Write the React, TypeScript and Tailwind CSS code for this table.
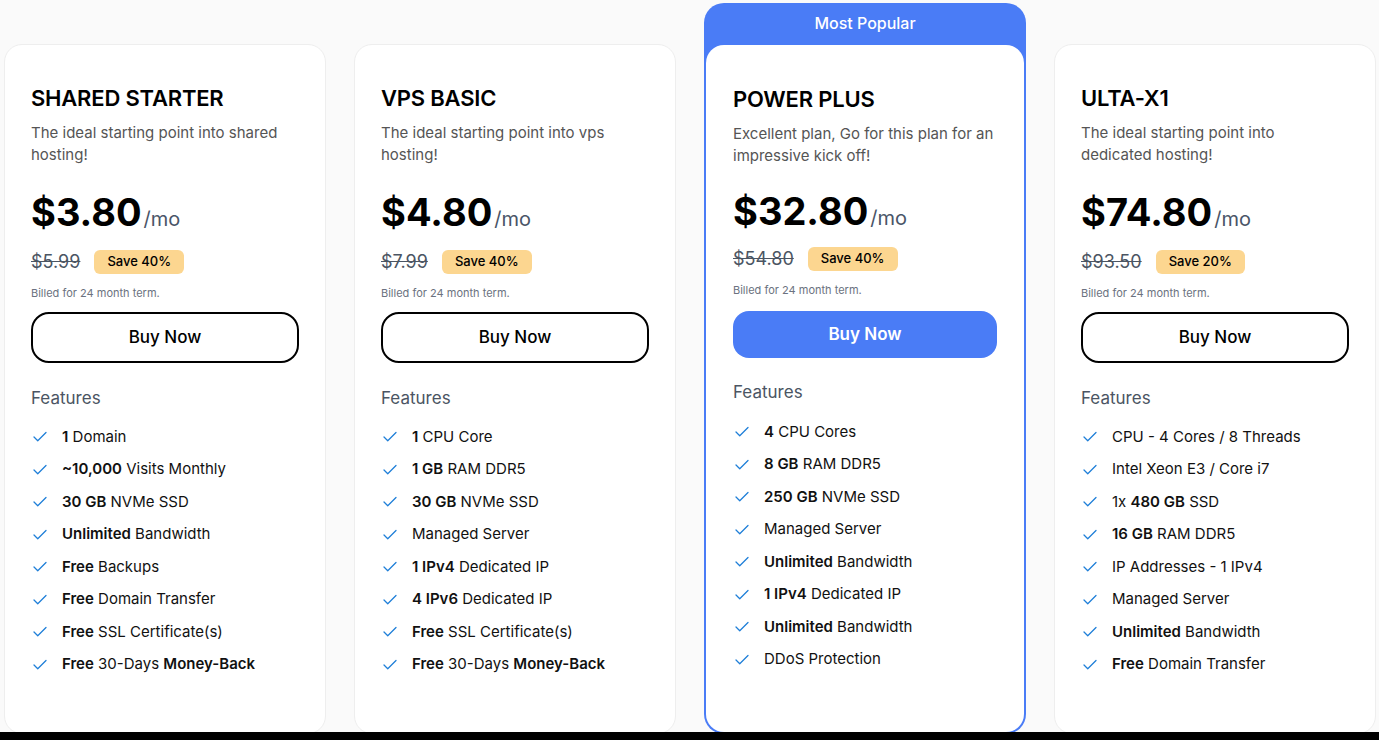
import React from 'react';
import { Check } from 'lucide-react';

type Feature = { bold?: string; text: string; bold2?: string; tail?: string };

type Plan = {
  name: string;
  desc: string;
  price: string;
  old: string;
  save: string;
  features: Feature[];
  popular?: boolean;
};

const PLANS: Plan[] = [
  {
    name: 'SHARED STARTER',
    desc: 'The ideal starting point into shared hosting!',
    price: '$3.80',
    old: '$5.99',
    save: 'Save 40%',
    features: [
      { bold: '1', text: ' Domain' },
      { bold: '~10,000', text: ' Visits Monthly' },
      { bold: '30 GB', text: ' NVMe SSD' },
      { bold: 'Unlimited', text: ' Bandwidth' },
      { bold: 'Free', text: ' Backups' },
      { bold: 'Free', text: ' Domain Transfer' },
      { bold: 'Free', text: ' SSL Certificate(s)' },
      { bold: 'Free', text: ' 30-Days ', bold2: 'Money-Back' },
    ],
  },
  {
    name: 'VPS BASIC',
    desc: 'The ideal starting point into vps hosting!',
    price: '$4.80',
    old: '$7.99',
    save: 'Save 40%',
    features: [
      { bold: '1', text: ' CPU Core' },
      { bold: '1 GB', text: ' RAM DDR5' },
      { bold: '30 GB', text: ' NVMe SSD' },
      { text: 'Managed Server' },
      { bold: '1 IPv4', text: ' Dedicated IP' },
      { bold: '4 IPv6', text: ' Dedicated IP' },
      { bold: 'Free', text: ' SSL Certificate(s)' },
      { bold: 'Free', text: ' 30-Days ', bold2: 'Money-Back' },
    ],
  },
  {
    name: 'POWER PLUS',
    desc: 'Excellent plan, Go for this plan for an impressive kick off!',
    price: '$32.80',
    old: '$54.80',
    save: 'Save 40%',
    popular: true,
    features: [
      { bold: '4', text: ' CPU Cores' },
      { bold: '8 GB', text: ' RAM DDR5' },
      { bold: '250 GB', text: ' NVMe SSD' },
      { text: 'Managed Server' },
      { bold: 'Unlimited', text: ' Bandwidth' },
      { bold: '1 IPv4', text: ' Dedicated IP' },
      { bold: 'Unlimited', text: ' Bandwidth' },
      { text: 'DDoS Protection' },
    ],
  },
  {
    name: 'ULTA-X1',
    desc: 'The ideal starting point into dedicated hosting!',
    price: '$74.80',
    old: '$93.50',
    save: 'Save 20%',
    features: [
      { text: 'CPU - 4 Cores / 8 Threads' },
      { text: 'Intel Xeon E3 / Core i7' },
      { text: '1x ', bold2: '480 GB', tail: ' SSD' },
      { bold: '16 GB', text: ' RAM DDR5' },
      { text: 'IP Addresses - 1 IPv4' },
      { text: 'Managed Server' },
      { bold: 'Unlimited', text: ' Bandwidth' },
      { bold: 'Free', text: ' Domain Transfer' },
    ],
  },
];

function FeatureRow({ f }: { f: Feature }) {
  return (
    <li className="flex items-center h-[24px]">
      <Check className="w-[18px] h-[18px] text-[#1f7fd8] shrink-0" strokeWidth={1.7} />
      <span className="ml-[13px] text-[15px] text-[#111]">
        {f.bold && <span className="font-semibold">{f.bold}</span>}
        {f.text}
        {f.bold2 && <span className="font-semibold">{f.bold2}</span>}
        {f.tail}
      </span>
    </li>
  );
}

function CardBody({ plan }: { plan: Plan }) {
  const pop = !!plan.popular;
  return (
    <div className={`flex flex-col ${pop ? 'px-[27px] pt-[39px]' : 'px-[26px] pt-[38px]'}`}>
      <h2 className="text-[22px] leading-[30px] font-semibold text-black tracking-[-0.2px]">{plan.name}</h2>
      <p className="mt-[9px] text-[15px] leading-[22px] text-[#555]">{plan.desc}</p>
      <div className={`flex items-baseline ${pop ? 'mt-[20px]' : 'mt-[22px]'}`}>
        <span className="text-[38px] leading-[48px] font-bold text-black">{plan.price}</span>
        <span className="text-[20px] text-[#4a5568] ml-[2px]">/mo</span>
      </div>
      <div className={`flex items-center ${pop ? 'mt-[10px]' : 'mt-[12px]'}`}>
        <span className="text-[18px] text-[#4b5563] line-through">{plan.old}</span>
        <span className="ml-[14px] h-[24px] px-[13px] flex items-center rounded-[6px] bg-[#fcd690] text-[13px] font-medium text-black">
          {plan.save}
        </span>
      </div>
      <p className="mt-[10px] text-[11px] leading-[16px] text-[#6b7280]">Billed for 24 month term.</p>
      {pop ? (
        <button className="mt-[13px] h-[47px] w-full rounded-[16px] bg-[#4a7cf6] text-white text-[17px] font-semibold">
          Buy Now
        </button>
      ) : (
        <button className="mt-[11px] h-[51px] w-full rounded-[18px] border-2 border-black bg-white text-black text-[17px] font-medium">
          Buy Now
        </button>
      )}
      <h3 className={`text-[17px] leading-[24px] text-[#4b5563] ${pop ? 'mt-[22px]' : 'mt-[23px]'}`}>Features</h3>
      <ul className={`flex flex-col gap-[8.5px] ${pop ? 'mt-[16px]' : 'mt-[15px]'}`}>
        {plan.features.map((f, i) => (
          <FeatureRow key={i} f={f} />
        ))}
      </ul>
    </div>
  );
}

export default function App() {
  return (
    <div className="w-[1379px] h-[740px] bg-[#fafafa] flex flex-col overflow-hidden" style={{ fontFamily: 'Inter, "Open Sans", sans-serif' }}>
      <div className="h-[732px] overflow-hidden pl-[4px] pr-[3px] pt-[3px] flex items-start gap-[28px]">
        {PLANS.map((plan) =>
          plan.popular ? (
            <div key={plan.name} className="w-[322px] h-[731px] shrink-0 rounded-[20px] bg-[#4a7cf6] p-[2px] flex flex-col">
              <div className="h-[40px] pb-[4px] flex items-center justify-center text-white text-[16px] font-medium">Most Popular</div>
              <div className="flex-1 bg-white rounded-[18px]">
                <CardBody plan={plan} />
              </div>
            </div>
          ) : (
            <div key={plan.name} className="mt-[41px] w-[322px] h-[690px] shrink-0 rounded-[18px] bg-white border border-[#eeeeee]">
              <CardBody plan={plan} />
            </div>
          ),
        )}
      </div>
      <div className="flex-1 bg-black" />
    </div>
  );
}
